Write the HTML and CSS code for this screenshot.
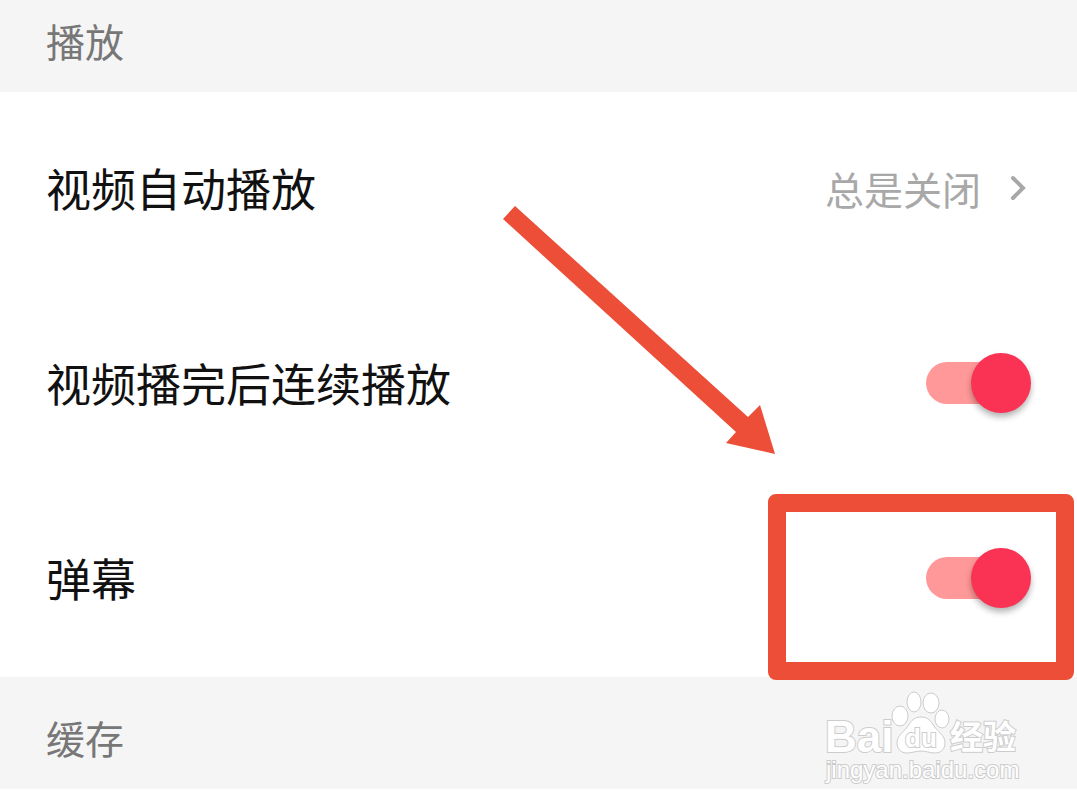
FILE: index.html
```html
<!DOCTYPE html>
<html lang="zh-CN">
<head>
    <meta charset="UTF-8">
    <meta name="viewport" content="width=device-width, initial-scale=1.0">
    <title>播放</title>
    <link rel="stylesheet" href="styles.css">
</head>
<body>
    <main>
        <section>
            <h2 class="heading heading-first">播放</h2>
            <div class="list">
                <a class="row" href="#">
                    <span>视频自动播放</span>
                    <span class="value">
                        总是关闭
                        <svg class="chevron" viewBox="0 0 18 28" aria-hidden="true">
                            <path d="M4 4L14 14L4 24"/>
                        </svg>
                    </span>
                </a>
                <div class="row">
                    <label for="continuous">视频播完后连续播放</label>
                    <input class="switch" type="checkbox" id="continuous" checked>
                </div>
                <div class="row">
                    <label for="danmu">弹幕</label>
                    <input class="switch" type="checkbox" id="danmu" checked>
                    <div class="highlight"></div>
                </div>
                <svg class="arrow" viewBox="0 0 273 249" aria-hidden="true">
                    <path d="M12 0L245 211L257 199L272 248L223 237L233 226L0 13Z"/>
                </svg>
            </div>
        </section>
        <section class="cache">
            <h2 class="heading">缓存</h2>
            <svg class="watermark" viewBox="0 0 200 98">
                <text class="brand" x="1" y="64">Bai</text>
                <ellipse cx="76" cy="28" rx="8" ry="10"/>
                <ellipse cx="90" cy="14" rx="7" ry="10"/>
                <ellipse cx="107" cy="15" rx="8" ry="10"/>
                <ellipse cx="118" cy="31" rx="7" ry="9"/>
                <path d="M97 29C90 29 87 33 84 38C80 44 73 47 73 55C73 61 77 65 83 65C88 65 92 63 97 63C102 63 106 65 111 65C117 65 121 61 121 55C121 47 114 44 110 38C107 33 104 29 97 29Z"/>
                <text class="du" x="81" y="59">du</text>
                <text class="name" x="126" y="61">经验</text>
                <text class="site" x="2" y="90">jingyan.baidu.com</text>
            </svg>
        </section>
    </main>
</body>
</html>
```

FILE: styles.css
```css
* {
    box-sizing: border-box;
}
body {
    margin: 0;
    background-color: #fff;
    color: #111;
    font-family: "Noto Sans CJK SC", sans-serif;
}
.heading {
    margin: 0;
    padding: 32px 46px 24px;
    background-color: #f5f5f5;
    color: #777;
    font-size: 39px;
    font-weight: normal;
    line-height: 56px;
}
.heading-first {
    padding-top: 12px;
}
.list, .cache {
    position: relative;
}
.row {
    position: relative;
    display: flex;
    align-items: center;
    justify-content: space-between;
    height: 195px;
    padding: 0 46px 4px;
    color: #111;
    font-size: 45px;
    text-decoration: none;
}
.value {
    display: flex;
    align-items: center;
    gap: 28px;
    padding-right: 4px;
    color: #a8a8a8;
    font-size: 39px;
}
.chevron {
    width: 18px;
    height: 28px;
    fill: none;
    stroke: #a8a8a8;
    stroke-width: 4;
    stroke-linecap: round;
}
.switch {
    appearance: none;
    display: flex;
    align-items: center;
    width: 105px;
    height: 60px;
    margin: 0;
}
.switch::before {
    content: "";
    width: 90px;
    height: 42px;
    border-radius: 21px;
    background-color: #ff9898;
}
.switch::after {
    content: "";
    width: 60px;
    height: 60px;
    margin-left: -45px;
    border-radius: 50%;
    background-color: #fa3254;
    box-shadow: 0 4px 6px rgba(0, 0, 0, 0.3);
}
/* red frame round the switch */
.highlight {
    position: absolute;
    top: 12px;
    right: 3px;
    bottom: -3px;
    z-index: 1;
    width: 306px;
    border: 18px solid #ec4e38;
    border-radius: 8px;
    pointer-events: none;
}
.arrow {
    position: absolute;
    top: 114px;
    right: 301px;
    width: 273px;
    height: 249px;
    fill: #ec4e38;
    pointer-events: none;
}
.watermark {
    position: absolute;
    top: 11px;
    right: 53px;
    width: 200px;
    height: 98px;
    fill: #fff;
    stroke: #ccc;
    stroke-width: 1;
    font-family: "Liberation Sans", "Noto Sans CJK SC", sans-serif;
}
.watermark text {
    paint-order: stroke;
    stroke-width: 2;
}
.brand {
    font-size: 44px;
    font-weight: bold;
}
.du {
    font-size: 26px;
    font-weight: bold;
}
.name {
    font-size: 33px;
    font-weight: bold;
}
.site {
    font-size: 24px;
}
```
